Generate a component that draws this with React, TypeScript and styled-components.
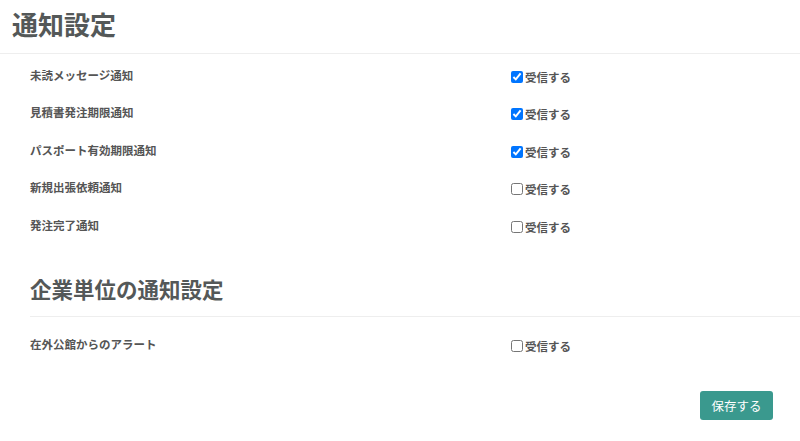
import React from "react";
import styled, { createGlobalStyle } from "styled-components";

const GlobalStyle = createGlobalStyle`
  body {
    margin: 0;
    background: #fff;
    font-family: "Noto Sans CJK JP", "Noto Sans", sans-serif;
    color: #555;
  }
`;

const Page = styled.div`
  width: 800px;
  min-height: 441px;
`;

const Header = styled.div`
  padding: 6px 12px 11px;
  border-bottom: 1px solid #eeeeee;
`;

const Title = styled.h1`
  margin: 0;
  font-size: 26px;
  line-height: 36px;
  font-weight: 700;
  color: #545858;
`;

const List = styled.div<{ $indent?: boolean }>`
  padding: ${(p) => (p.$indent ? "2px 0 0 30px" : "8px 0 0 0")};
`;

const Row = styled.div`
  display: grid;
  grid-template-columns: 481px 1fr;
  align-items: center;
  height: 37.5px;
`;

const Label = styled.div`
  font-size: 11.5px;
  font-weight: 700;
  line-height: 18px;
  color: #555;
`;

const CheckLabel = styled.label`
  display: flex;
  align-items: center;
  margin-top: 4px;
  font-size: 11.5px;
  font-weight: 700;
  line-height: 18px;
  color: #555;
`;

const Check = styled.input`
  width: 12px;
  height: 12px;
  margin: 0 2px 0 0;
`;

const Section = styled.div`
  margin: 30.5px 0 0 30px;
`;

const SubTitle = styled.h2`
  margin: 0;
  padding-bottom: 12px;
  font-size: 21.5px;
  line-height: 30px;
  font-weight: 700;
  color: #545858;
  border-bottom: 1px solid #eeeeee;
`;

const Footer = styled.div`
  display: flex;
  justify-content: flex-end;
  padding: 28.5px 27px 0 0;
`;

const SaveButton = styled.button`
  width: 73px;
  height: 29px;
  border: none;
  border-radius: 3px;
  background: #3a998e;
  color: #fff;
  font-family: inherit;
  font-size: 12.5px;
  line-height: 29px;
  padding: 0;
  cursor: pointer;
`;

type Item = { label: string; checked: boolean };

const personal: Item[] = [
  { label: "未読メッセージ通知", checked: true },
  { label: "見積書発注期限通知", checked: true },
  { label: "パスポート有効期限通知", checked: true },
  { label: "新規出張依頼通知", checked: false },
  { label: "発注完了通知", checked: false },
];

const company: Item[] = [{ label: "在外公館からのアラート", checked: false }];

const SettingRow = ({ item }: { item: Item }) => (
  <Row>
    <Label>{item.label}</Label>
    <CheckLabel>
      <Check type="checkbox" defaultChecked={item.checked} />
      受信する
    </CheckLabel>
  </Row>
);

const App = () => {
  return (
    <Page>
      <GlobalStyle />
      <Header>
        <Title>通知設定</Title>
      </Header>
      <List $indent>
        {personal.map((item) => (
          <SettingRow key={item.label} item={item} />
        ))}
      </List>
      <Section>
        <SubTitle>企業単位の通知設定</SubTitle>
        <List>
          {company.map((item) => (
            <SettingRow key={item.label} item={item} />
          ))}
        </List>
      </Section>
      <Footer>
        <SaveButton>保存する</SaveButton>
      </Footer>
    </Page>
  );
};

export default App;
